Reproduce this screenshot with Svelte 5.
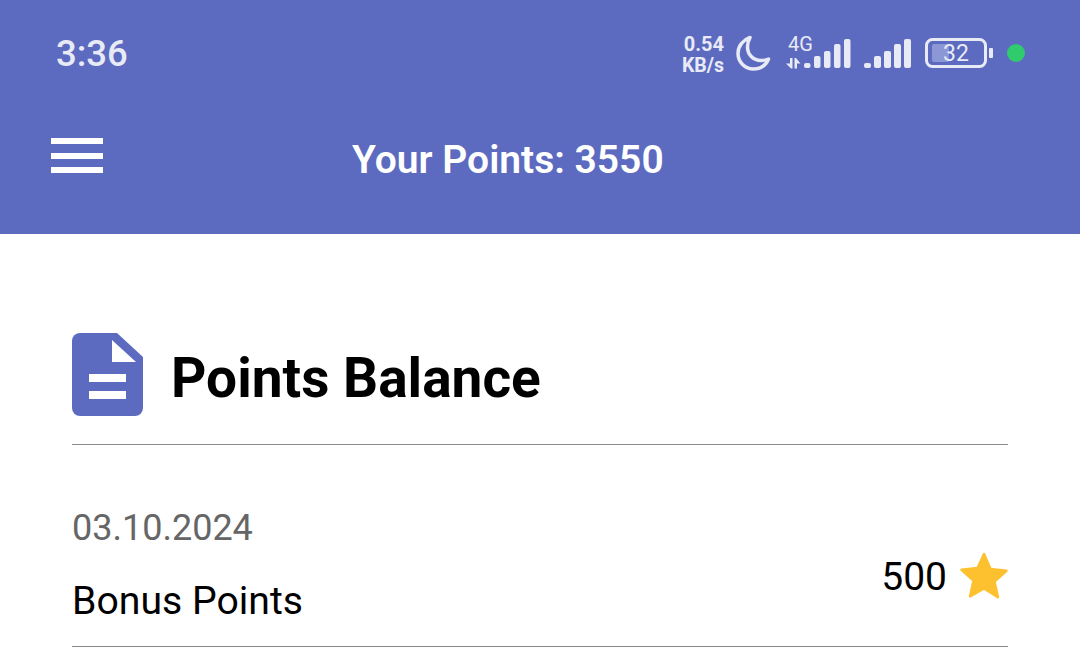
<script>
	const bars1 = [
		[19, 27],
		[29, 20],
		[39, 15],
		[49, 8],
		[59, 3]
	];
	const bars2 = [
		[0, 25],
		[10, 18],
		[20, 13],
		[30, 6],
		[40, 1]
	];
	const rows = [{ date: '03.10.2024', name: 'Bonus Points', points: 500 }];
</script>

<div class="page">
	<header class="appbar">
		<div class="status">
			<span class="time">3:36</span>
			<div class="icons">
				<div class="speed">
					<span>0.54</span>
					<span class="unit">KB/s</span>
				</div>
				<svg class="moon" width="35" height="36" viewBox="0 0 35 36">
					<path
						d="M14 2.500C7 5 2 11 2 18.500 2 27 9 34 17.500 34c7 0 12.500-4 15-10-2.500 1-5 1.500-7.500 1.500C17 25.500 11.500 19.500 11.500 12c0-3.500 1-7 2.500-9.500z"
						fill="none"
						stroke="#e8eaf6"
						stroke-width="3.500"
						stroke-linejoin="round"
					/>
				</svg>
				<svg class="net" width="67" height="42" viewBox="0 -4 67 42">
					<text x="3" y="15" class="g4">4G</text>
					<path d="M1 27.500h4V22h2.500v10.500H6zM9.500 22H11l4.500 5.500H12v5H9.500z" fill="#e8eaf6" />
					{#each bars1 as [x, y]}
						<rect {x} {y} width="6.500" height={32 - y} rx="2" fill="#e8eaf6" />
					{/each}
				</svg>
				<svg class="sig" width="49" height="31" viewBox="0 0 49 31">
					{#each bars2 as [x, y]}
						<rect {x} {y} width="7" height={30 - y} rx="2" fill="#e8eaf6" />
					{/each}
				</svg>
				<svg class="batt" width="68" height="30" viewBox="0 0 68 30">
					<rect x="1.500" y="1.500" width="59" height="27" rx="6" fill="none" stroke="#e8eaf6" stroke-width="3" />
					<rect x="7" y="6" width="17" height="18" rx="2" fill="#8c97d6" />
					<text x="31" y="23" class="level" text-anchor="middle">32</text>
					<rect x="64" y="10" width="4" height="10" rx="1" fill="#e8eaf6" />
				</svg>
				<span class="dot"></span>
			</div>
		</div>
		<div class="toolbar">
			<button class="menu" aria-label="Menu">
				<span></span>
				<span></span>
				<span></span>
			</button>
			<h1>Your Points: 3550</h1>
		</div>
	</header>

	<main class="content">
		<div class="heading">
			<svg width="71" height="83" viewBox="0 0 71 83">
				<path
					d="M8 0H45L71 24V75a8 8 0 0 1-8 8H8a8 8 0 0 1-8-8V8a8 8 0 0 1 8-8z"
					fill="#5c6bc0"
				/>
				<path d="M40 7V29H64z" fill="#fff" />
				<rect x="17" y="41" width="37" height="8" fill="#fff" />
				<rect x="17" y="58" width="37" height="8" fill="#fff" />
			</svg>
			<h2>Points Balance</h2>
		</div>

		{#each rows as row}
			<div class="row">
				<div class="info">
					<div class="date">{row.date}</div>
					<div class="name">{row.name}</div>
				</div>
				<div class="points">
					<span>{row.points}</span>
					<svg width="50" height="48" viewBox="0 0 50 48">
						<path
							d="M25 2l6.500 15 16 1.700-12 10.800 3.400 15.800L25 36.500 11.100 44.300l3.400-15.800-12-10.800 16-1.700z"
							fill="#fdc02f"
							stroke="#fdc02f"
							stroke-width="2.500"
							stroke-linejoin="round"
						/>
					</svg>
				</div>
			</div>
		{/each}
	</main>
</div>

<style>
	:global(body) {
		background: #fff;
		font-family: Roboto, 'Liberation Sans', sans-serif;
	}
	.page {
		height: 661px;
		overflow: hidden;
	}
	.appbar {
		background: #5c6bc0;
		height: 234px;
	}
	.status {
		display: flex;
		align-items: center;
		justify-content: space-between;
		height: 106px;
		padding: 0 55px 0 56px;
		color: #e8eaf6;
	}
	.time {
		font-size: 36.500px;
		font-weight: 500;
	}
	.icons {
		display: flex;
		align-items: center;
	}
	.speed {
		display: flex;
		flex-direction: column;
		align-items: flex-end;
		margin: 3px 12px 0 0;
		font-weight: 700;
		line-height: 21px;
		font-size: 20px;
	}
	.unit {
		font-size: 19.500px;
	}
	.moon {
		margin-right: 14px;
	}
	.net {
		margin-right: 12px;
	}
	.sig {
		margin-right: 12px;
	}
	.batt {
		margin-right: 14px;
	}
	.g4 {
		font-size: 20px;
		fill: #e8eaf6;
	}
	.level {
		font-size: 23px;
		fill: #e8eaf6;
	}
	.dot {
		width: 18px;
		height: 18px;
		border-radius: 50%;
		background: #2fcb6c;
	}
	.toolbar {
		display: flex;
		align-items: center;
		height: 104px;
		padding-left: 51px;
		color: #fff;
	}
	.menu {
		display: flex;
		flex-direction: column;
		gap: 8.500px;
		width: 52px;
		padding: 0;
		margin-top: -5px;
		border: 0;
		background: none;
	}
	.menu span {
		height: 6px;
		background: #fff;
	}
	h1 {
		margin: 4px 0 0 249px;
		font-size: 39px;
		font-weight: 600;
		line-height: 1;
	}
	.content {
		padding: 99px 72px 0;
	}
	.heading {
		display: flex;
		align-items: center;
		gap: 28px;
		padding-bottom: 28px;
		border-bottom: 1px solid #8a8a8a;
	}
	h2 {
		margin: 8px 0 0;
		font-size: 55px;
		font-weight: 700;
		line-height: 1;
		color: #000;
	}
	.row {
		display: flex;
		align-items: flex-start;
		justify-content: space-between;
		box-sizing: border-box;
		height: 202px;
		padding-top: 63px;
		border-bottom: 1px solid #8a8a8a;
	}
	.date {
		font-size: 36px;
		color: #666;
		line-height: 40px;
	}
	.name {
		margin-top: 33px;
		font-size: 39.200px;
		color: #000;
		line-height: 40px;
	}
	.points {
		display: flex;
		align-items: center;
		gap: 12px;
		margin: 44px -1px 0 0;
		font-size: 39px;
		color: #000;
	}
	.points span {
		margin-top: 2px;
	}
</style>
